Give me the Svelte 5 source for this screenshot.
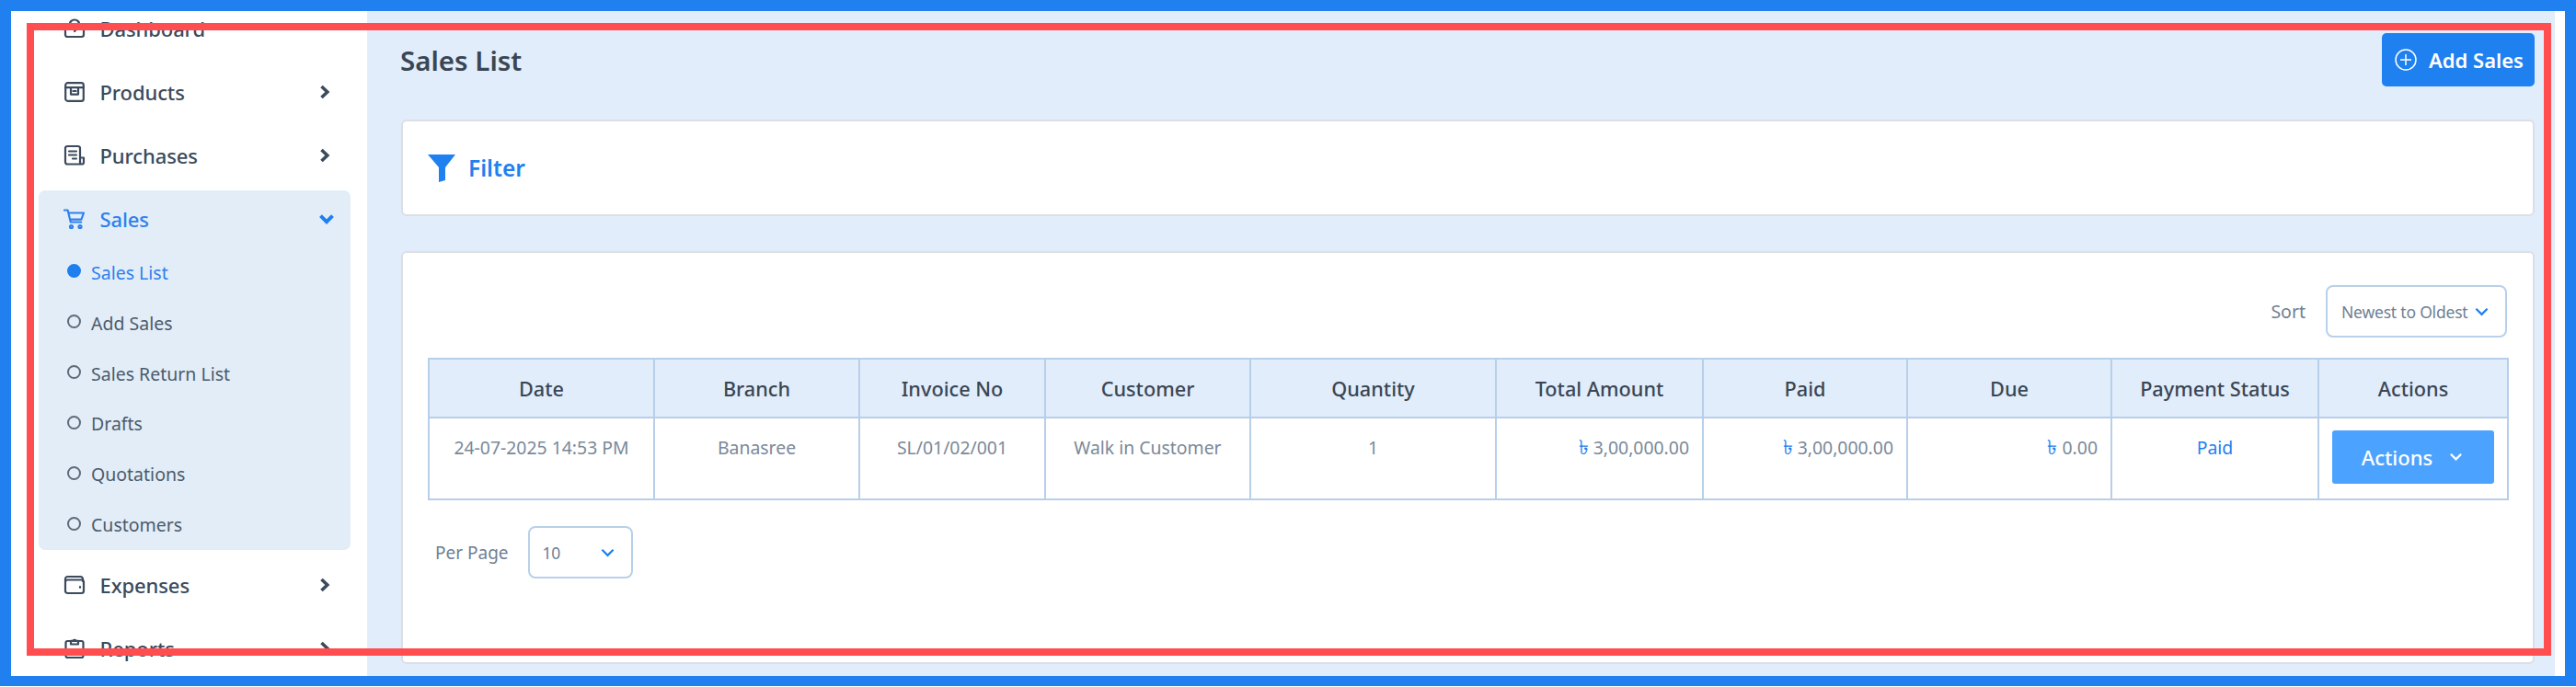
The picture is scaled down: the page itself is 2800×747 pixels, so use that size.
<script>
  const subItems = ['Sales List', 'Add Sales', 'Sales Return List', 'Drafts', 'Quotations', 'Customers'];
  const columns = [
    { label: 'Date', width: 245 },
    { label: 'Branch', width: 223 },
    { label: 'Invoice No', width: 202 },
    { label: 'Customer', width: 223 },
    { label: 'Quantity', width: 267 },
    { label: 'Total Amount', width: 225 },
    { label: 'Paid', width: 222 },
    { label: 'Due', width: 222 },
    { label: 'Payment Status', width: 225 },
    { label: 'Actions', width: 206 }
  ];
</script>

{#snippet chevronRight()}
  <svg class="chev" viewBox="0 0 12 16" aria-hidden="true"><path d="M2.5 2 8.8 8l-6.3 6" /></svg>
{/snippet}

<div class="frame">
  <aside class="sidebar">
    <nav class="nav">
      <div class="row">
        <svg class="ico" viewBox="0 0 24 24" aria-hidden="true"><rect x="2" y="8" width="20" height="13" rx="2.2" /><path d="M6.500 8a5.500 5.500 0 0 1 11 0M12 15l3-3" /></svg>
        <span>Dashboard</span>
      </div>
      <div class="row">
        <svg class="ico" viewBox="0 0 24 24" aria-hidden="true"><rect x="2.200" y="2.200" width="19.600" height="19.600" rx="2.400" /><path d="M2.200 7.200h19.600M8 7.200v7.400h8V7.200M10.500 11h3" /></svg>
        <span>Products</span>
        {@render chevronRight()}
      </div>
      <div class="row">
        <svg class="ico" viewBox="0 0 24 24" aria-hidden="true"><path d="M19.500 21.500H4.200A2.200 2.200 0 0 1 2 19.300V4.200A2.200 2.200 0 0 1 4.200 2h11.600A2.200 2.200 0 0 1 18 4.200v15.300a2 2 0 0 0 4 0V14.500h-4M6 7.500h8M6 11.500h8M10 15.500h4" /></svg>
        <span>Purchases</span>
        {@render chevronRight()}
      </div>
      <section class="group">
        <div class="row head">
          <svg class="ico" viewBox="0 0 24 24" aria-hidden="true"><path d="M1 2.500h3.600l3.200 13h11.400M5.200 5.500H22l-2.600 7.200H7" /><circle cx="8.500" cy="20.500" r="1.500" /><circle cx="18" cy="20.500" r="1.500" /></svg>
          <span>Sales</span>
          <svg class="chev down" viewBox="0 0 16 12" aria-hidden="true"><path d="M2 2.500 8 8.500l6-6" /></svg>
        </div>
        <ul class="sub">
          {#each subItems as item, i}
            <li class:active={i === 0}><i class="dot"></i><span>{item}</span></li>
          {/each}
        </ul>
      </section>
      <div class="row">
        <svg class="ico" viewBox="0 0 24 24" aria-hidden="true"><path d="M2 8V5.500A2.500 2.500 0 0 1 4.500 3h14A2.500 2.500 0 0 1 21 5.500V8" /><rect x="2" y="6.500" width="20" height="14.500" rx="2.500" /><path d="M18 14v.800" /></svg>
        <span>Expenses</span>
        {@render chevronRight()}
      </div>
      <div class="row">
        <svg class="ico" viewBox="0 0 24 24" aria-hidden="true"><rect x="2.500" y="4" width="19" height="18" rx="2" /><path d="M8 3.800h2.500a1.700 1.700 0 0 1 3 0H16v3.700H8z" /></svg>
        <span>Reports</span>
        {@render chevronRight()}
      </div>
    </nav>
  </aside>

  <main class="main">
    <header class="top">
      <h1>Sales List</h1>
      <button class="add">
        <svg class="plus" viewBox="0 0 24 24" aria-hidden="true"><circle cx="12" cy="12" r="11" /><path d="M12 6v12M6 12h12" /></svg>
        <span>Add Sales</span>
      </button>
    </header>

    <section class="card filter">
      <svg class="funnel" viewBox="0 0 30 30" aria-hidden="true"><path d="M0 0h30L19 14v14l-7 2V14z" /></svg>
      <span>Filter</span>
    </section>

    <section class="card list">
      <div class="sortbar">
        <span>Sort</span>
        <div class="select sort">
          <span>Newest to Oldest</span>
          <svg class="caret" viewBox="0 0 16 10" aria-hidden="true"><path d="M1.500 1.500 8 8l6.500-6.500" /></svg>
        </div>
      </div>
      <table>
        <colgroup>
          {#each columns as c}
            <col style="width:{c.width}px" />
          {/each}
        </colgroup>
        <thead>
          <tr>
            {#each columns as c}
              <th>{c.label}</th>
            {/each}
          </tr>
        </thead>
        <tbody>
          <tr>
            <td>24-07-2025 14:53 PM</td>
            <td>Banasree</td>
            <td>SL/01/02/001</td>
            <td>Walk in Customer</td>
            <td>1</td>
            <td class="num"><b>৳</b> 3,00,000.00</td>
            <td class="num"><b>৳</b> 3,00,000.00</td>
            <td class="num"><b>৳</b> 0.00</td>
            <td class="paid">Paid</td>
            <td class="act">
              <button class="actions">
                <span>Actions</span>
                <svg viewBox="0 0 16 10" aria-hidden="true"><path d="M2 1.500 8 7.500l6-6" /></svg>
              </button>
            </td>
          </tr>
        </tbody>
      </table>
      <div class="pager">
        <span>Per Page</span>
        <div class="select per">
          <span>10</span>
          <svg class="caret" viewBox="0 0 16 10" aria-hidden="true"><path d="M1.500 1.500 8 8l6.500-6.500" /></svg>
        </div>
      </div>
    </section>
  </main>

  <div class="marker" aria-hidden="true"></div>
</div>

<style>
  :global(body) {
    margin: 0;
  }

  .frame {
    position: relative;
    box-sizing: border-box;
    display: flex;
    width: 2800px;
    height: 746px;
    padding-right: 11px;
    border: 12px solid #2080f0;
    border-bottom-width: 11px;
    background: #fff;
    box-shadow: 0 1px 0 #a9cdf7;
    overflow: hidden;
    font-family: 'Noto Sans', sans-serif;
    color: #3b4a5c;
  }

  .marker {
    position: absolute;
    left: 17px;
    top: 13px;
    width: 2744px;
    height: 688px;
    box-sizing: border-box;
    border: 8px solid #ff4d50;
    pointer-events: none;
  }

  .sidebar {
    flex: none;
    box-sizing: border-box;
    width: 388px;
    padding: 0 18px 0 30px;
    border-right: 1px solid #e6edf5;
    overflow: hidden;
  }

  .nav {
    display: flex;
    flex-direction: column;
    gap: 7px;
    margin-top: -12px;
  }

  .row {
    display: flex;
    align-items: center;
    height: 62px;
    padding: 0 22px 0 27px;
    font-size: 22px;
    font-weight: 500;
    letter-spacing: -0.1px;
  }

  .row > span {
    flex: 1;
    margin-left: 15.500px;
  }

  .ico {
    flex: none;
    width: 24px;
    height: 24px;
    fill: none;
    stroke: currentColor;
    stroke-width: 2.200;
    stroke-linejoin: round;
    stroke-linecap: round;
  }

  .chev {
    flex: none;
    width: 12px;
    height: 16px;
    fill: none;
    stroke: #3b4a5c;
    stroke-width: 3.600;
  }

  .chev.down {
    width: 18px;
    height: 13px;
    margin-right: -5px;
    stroke: #1e7ff0;
  }

  .group {
    border-radius: 7px;
    background: #e2edf8;
  }

  .head {
    color: #2f80ed;
  }

  .sub {
    margin: 0;
    padding: 0;
    list-style: none;
  }

  .sub li {
    display: flex;
    align-items: center;
    gap: 11px;
    height: 54.830px;
    padding-left: 31px;
    font-size: 19.500px;
    color: #4c5a6a;
  }

  .sub li.active {
    color: #2f80ed;
  }

  .dot {
    flex: none;
    box-sizing: border-box;
    width: 15px;
    height: 15px;
    margin-top: -3px;
    border: 2.500px solid #5f6b78;
    border-radius: 50%;
  }

  .active .dot {
    border-color: #1e7ff0;
    background: #1e7ff0;
  }

  .main {
    flex: 1;
    box-sizing: border-box;
    min-width: 0;
    padding: 24px 22px 0 36px;
    background: #e1edfb;
  }

  .top {
    display: flex;
    align-items: center;
    justify-content: space-between;
    height: 58px;
  }

  h1 {
    margin: 0 0 0 -1px;
    font-size: 29.500px;
    font-weight: 600;
    color: #3a4653;
  }

  button {
    border: 0;
    font-family: inherit;
    color: #fff;
  }

  .add {
    display: flex;
    align-items: center;
    gap: 13px;
    box-sizing: border-box;
    width: 166px;
    height: 58px;
    padding: 0 0 0 14px;
    border-radius: 5px;
    background: #1f80f0;
    font-size: 22px;
    font-weight: 600;
  }

  .plus {
    flex: none;
    width: 24px;
    height: 24px;
    fill: none;
    stroke: #fff;
    stroke-width: 1.500;
  }

  .card {
    box-sizing: border-box;
    border: 2px solid #dcdfe4;
    border-radius: 6px;
    background: #fff;
  }

  .filter {
    display: flex;
    align-items: center;
    gap: 14px;
    height: 105px;
    margin-top: 36px;
    padding-left: 27px;
    font-size: 24.500px;
    font-weight: 600;
    color: #1f80f0;
  }

  .funnel {
    width: 30px;
    height: 30px;
    fill: #1f80f0;
  }

  .list {
    height: 449px;
    margin-top: 38px;
    padding: 35px 28px 0 27px;
  }

  .sortbar {
    display: flex;
    align-items: center;
    justify-content: flex-end;
    gap: 22px;
    font-size: 19.500px;
    color: #6f8093;
  }

  .select {
    display: flex;
    align-items: center;
    justify-content: space-between;
    box-sizing: border-box;
    height: 57px;
    border: 2px solid #b9d0ea;
    border-radius: 8px;
    font-size: 17.500px;
    letter-spacing: -0.2px;
    color: #6f8093;
  }

  .sort {
    width: 197px;
    padding: 0 18px 0 15px;
  }

  .per {
    width: 114px;
    padding: 0 18px 0 14px;
  }

  .caret {
    flex: none;
    width: 15px;
    height: 10px;
    fill: none;
    stroke: #1e7ff0;
    stroke-width: 2.400;
  }

  table {
    width: 2260px;
    margin-top: 22px;
    border-collapse: collapse;
    table-layout: fixed;
  }

  th,
  td {
    box-sizing: border-box;
    border: 2px solid #b8cfe9;
    padding: 0 14px;
    text-align: center;
  }

  th {
    height: 64px;
    background: #e1edfb;
    font-size: 21.700px;
    font-weight: 500;
    color: #3a4653;
  }

  td {
    height: 89px;
    padding-top: 18px;
    padding-bottom: 0;
    vertical-align: top;
    font-size: 19.400px;
    color: #7a8999;
  }

  .num {
    text-align: right;
  }

  .num b {
    font-size: 1.150em;
    font-weight: 400;
    line-height: 1;
    color: #1f80f0;
  }

  .paid {
    color: #1f80f0;
  }

  .act {
    padding: 13px 0 0;
  }

  .actions {
    display: inline-flex;
    align-items: center;
    justify-content: center;
    gap: 18px;
    width: 176px;
    height: 58px;
    padding: 0 2px 0 0;
    border-radius: 3px;
    background: #4ca3ff;
    font-size: 22px;
    font-weight: 500;
  }

  .actions svg {
    width: 15px;
    height: 10px;
    fill: none;
    stroke: #fff;
    stroke-width: 2.400;
  }

  .pager {
    display: flex;
    align-items: center;
    gap: 21px;
    margin-top: 28px;
    padding-left: 8px;
    font-size: 19px;
    color: #6f8093;
  }
</style>
